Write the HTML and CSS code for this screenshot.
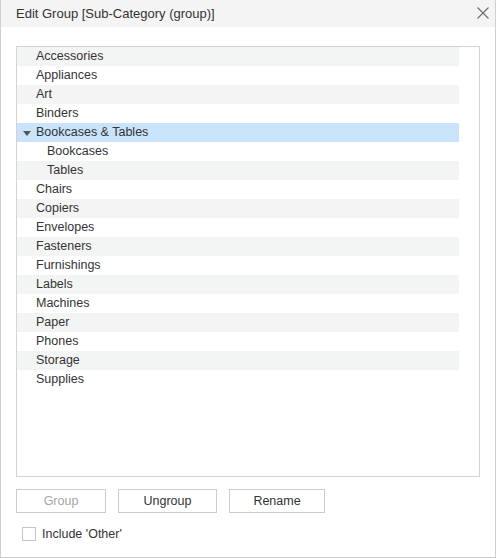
FILE: index.html
```html
<!DOCTYPE html>
<html>
<head>
<meta charset="utf-8">
<link rel="stylesheet" href="styles.css">
</head>
<body>
<div class="dialog">
  <div class="titlebar">
    <span class="title">Edit Group [Sub-Category (group)]</span>
    <svg class="close" width="12" height="12" viewBox="0 0 12 12"><path d="M0.5 0.5 L11.5 11.5 M11.5 0.5 L0.5 11.5" stroke="#6b6b6b" stroke-width="1.1" fill="none"/></svg>
  </div>
  <div class="content">
    <div class="listbox">
      <div class="row">Accessories</div>
      <div class="row">Appliances</div>
      <div class="row">Art</div>
      <div class="row">Binders</div>
      <div class="row selected"><span class="caret"></span>Bookcases &amp; Tables</div>
      <div class="row child">Bookcases</div>
      <div class="row child">Tables</div>
      <div class="row">Chairs</div>
      <div class="row">Copiers</div>
      <div class="row">Envelopes</div>
      <div class="row">Fasteners</div>
      <div class="row">Furnishings</div>
      <div class="row">Labels</div>
      <div class="row">Machines</div>
      <div class="row">Paper</div>
      <div class="row">Phones</div>
      <div class="row">Storage</div>
      <div class="row">Supplies</div>
    </div>
    <div class="buttons">
      <button class="btn btn-group" disabled>Group</button>
      <button class="btn btn-ungroup">Ungroup</button>
      <button class="btn btn-rename">Rename</button>
    </div>
    <label class="check"><span class="box"></span>Include 'Other'</label>
  </div>
</div>
</body>
</html>
```

FILE: styles.css
```css
html, body {
  margin: 0;
  padding: 0;
  background: #ffffff;
}
body {
  font-family: "Liberation Sans", Arial, sans-serif;
  color: #333333;
}
.dialog {
  width: 496px;
  height: 558px;
  box-sizing: border-box;
  border: 1px solid #cfcfcf;
  border-top: none;
  display: flex;
  flex-direction: column;
  background: #fff;
}
.titlebar {
  height: 27px;
  background: #f4f4f4;
  display: flex;
  align-items: center;
  justify-content: space-between;
  padding: 0 6px 0 15px;
  flex: none;
}
.title {
  font-size: 13px;
  color: #333;
  margin-top: -1px;
}
.close {
  margin-top: -1px;
}
.content {
  padding: 19px 15px 0 15px;
  display: flex;
  flex-direction: column;
}
.listbox {
  height: 431px;
  box-sizing: border-box;
  border: 1px solid #d4d4d4;
  padding-right: 20px;
}
.row {
  height: 19px;
  line-height: 19px;
  font-size: 12.5px;
  padding-left: 19px;
  display: flex;
  align-items: center;
  color: #333;
}
.row:nth-child(odd) {
  background: #f3f4f4;
}
.row.selected {
  background: #c9e3fb;
  padding-left: 6px;
}
.row.child {
  padding-left: 30px;
}
.caret {
  width: 0;
  height: 0;
  border-left: 4px solid transparent;
  border-right: 4px solid transparent;
  border-top: 5px solid #555;
  margin-right: 5px;
  margin-top: 1px;
}
.buttons {
  display: flex;
  gap: 12px;
  margin-top: 12px;
}
.btn {
  height: 24px;
  box-sizing: border-box;
  border: 1px solid #cccccc;
  background: #fff;
  font-family: "Liberation Sans", Arial, sans-serif;
  font-size: 12.5px;
  color: #333;
  padding: 0;
}
.btn-group { width: 90px; color: #a6a6a6; }
.btn-ungroup { width: 99px; }
.btn-rename { width: 96px; }
.check {
  display: flex;
  align-items: center;
  margin-top: 14px;
  margin-left: 6px;
  font-size: 12.5px;
  color: #333;
}
.box {
  width: 14px;
  height: 14px;
  box-sizing: border-box;
  border: 1px solid #c4c4c4;
  margin-right: 6px;
}
```
